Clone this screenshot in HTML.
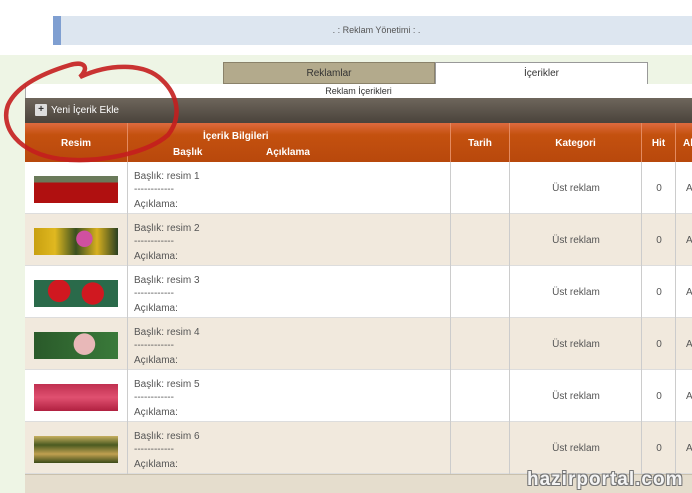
<!DOCTYPE html>
<html><head><meta charset="utf-8"><style>
*{margin:0;padding:0;box-sizing:border-box}
body{width:692px;height:493px;overflow:hidden;background:#fff;font-family:"Liberation Sans",sans-serif;position:relative;color:#444}
.a{position:absolute}
.hd{left:53px;top:16px;width:639px;height:29px;background:#dde6f0;border-left:8px solid #7f9fd1;font-size:9px;text-align:center;line-height:29px;color:#555}
.bg{left:0;top:55px;width:692px;height:438px;background:#eef5e5}
.tab{top:62px;height:22px;font-size:10px;text-align:center;line-height:22px;color:#333}
.panel{left:25px;top:84px;width:667px;height:409px;background:#fff;border-left:1px solid #aaa}
.bar{left:25px;top:98px;width:667px;height:25px;background:linear-gradient(#6e665c,#4a433b);color:#fff;font-size:10px;line-height:25px}
.th{top:123px;height:39px;background:linear-gradient(#dd6a3f,#c4510f 30%,#b8480c);color:#fff;font-size:10px;font-weight:bold;text-align:center;border-right:1px solid #e48a60}
.row{left:25px;width:667px;height:52px;border-bottom:1px solid #ddd}
.c{position:absolute;top:0;height:52px;border-right:1px solid #ccc}
.t{font-size:10px;color:#555;position:absolute}
.img{position:absolute;left:9px;top:14px;width:84px;height:27px}
</style></head><body>
<div class="a hd">. : Reklam Yönetimi : .</div>
<div class="a bg"></div>
<div class="a tab" style="left:223px;width:212px;background:#b3aa8c;border:1px solid #8a826a">Reklamlar</div>
<div class="a tab" style="left:435px;width:213px;background:#fff;border:1px solid #999;border-bottom:none">İçerikler</div>
<div class="a panel"></div>
<div class="a" style="left:25px;top:86px;width:667px;font-size:9px;text-align:center;color:#333">Reklam İçerikleri</div>
<div class="a bar"><span style="display:inline-block;width:12px;height:12px;background:#ddd;color:#333;text-align:center;line-height:12px;font-weight:bold;margin:0 4px 0 10px;vertical-align:middle;border-radius:1px">+</span>Yeni İçerik Ekle</div>
<div class="a th" style="left:25px;width:103px;line-height:42px">Resim</div>
<div class="a th" style="left:128px;width:323px"><div style="position:absolute;left:75px;top:8px">İçerik Bilgileri</div><div style="position:absolute;left:45px;top:24px">Başlık</div><div style="position:absolute;left:138px;top:24px">Açıklama</div></div>
<div class="a th" style="left:451px;width:59px;line-height:42px">Tarih</div>
<div class="a th" style="left:510px;width:132px;line-height:42px">Kategori</div>
<div class="a th" style="left:642px;width:34px;line-height:42px">Hit</div>
<div class="a th" style="left:676px;width:30px;line-height:42px;text-align:left;padding-left:7px">Ak</div>

<div id="rows"></div>
<div class="a" style="left:25px;top:474px;width:667px;height:19px;background:#e5ddcd;border-top:1px solid #c9c0ad"></div>
<div class="a" style="left:527px;top:469px;font-size:19px;font-weight:bold;color:#f4f4f4;letter-spacing:1px;text-shadow:1px 1px 0 #777,-1px -1px 0 #777,1px -1px 0 #777,-1px 1px 0 #777">hazirportal.com</div>
<svg class="a" style="left:0;top:55px" width="190" height="115"><path d="M162 25 C145 8 110 8 80 22 C90 12 84 6 70 10 C50 16 18 28 8 50 C0 72 18 98 60 104 C95 108 145 100 168 80 C182 62 178 40 162 25 Z" fill="none" stroke="#c41e1e" stroke-width="4.5" opacity=".9"/></svg>
<script>
var imgs=["linear-gradient(180deg,#6a7a5a 0 25%,#b01010 25% 100%)","radial-gradient(circle at 60% 40%,#d050a0 0 15%,transparent 16%),linear-gradient(90deg,#c8a010,#e0b820,#3a5020,#d8b020,#2a4020)","radial-gradient(circle at 30% 40%,#d01820 0 18%,transparent 19%),radial-gradient(circle at 70% 50%,#d01820 0 18%,transparent 19%),#2a6a4a","radial-gradient(circle at 60% 45%,#e8b8b8 0 20%,transparent 21%),linear-gradient(90deg,#2a5a2a,#3a7a3a)","linear-gradient(180deg,#c03050,#e05070,#b02040)","linear-gradient(180deg,#c8b060,#4a5a20,#c0a050,#3a4a18)"];
var h="";for(var i=0;i<6;i++){var y=162+i*52;var bg=i%2?"#f1e9dd":"#fff";
h+='<div class="a row" style="top:'+y+'px;background:'+bg+'"><div class="c" style="left:0;width:103px"><div class="img" style="background:'+imgs[i]+'"></div></div><div class="c" style="left:103px;width:323px"><div class="t" style="left:6px;top:9px">Başlık: resim '+(i+1)+'</div><div class="t" style="left:6px;top:22px">------------</div><div class="t" style="left:6px;top:37px">Açıklama:</div></div><div class="c" style="left:426px;width:59px"></div><div class="c" style="left:485px;width:132px"><div class="t" style="width:132px;text-align:center;top:21px">Üst reklam</div></div><div class="c" style="left:617px;width:34px"><div class="t" style="width:34px;text-align:center;top:21px">0</div></div><div class="t" style="left:661px;top:21px">A</div></div>';}
document.getElementById("rows").innerHTML=h;
</script>
</body></html>
